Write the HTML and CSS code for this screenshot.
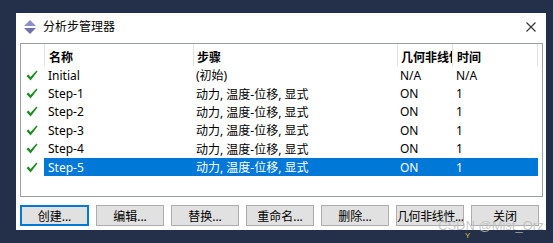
FILE: index.html
```html
<!DOCTYPE html>
<html lang="zh-CN">
<head>
    <meta charset="UTF-8">
    <title>分析步管理器</title>
    <link rel="stylesheet" href="styles.css">
</head>
<body>
    <div class="dialog">
        <div class="titlebar">
            <svg class="app-icon" width="12" height="14" viewBox="0 0 12 14">
                <polygon points="6,0 12,6 0,6" fill="#8d8fc6"/>
                <polygon points="0,8 12,8 6,14" fill="#6f71ab"/>
            </svg>
            <span class="title">分析步管理器</span>
            <svg class="close" width="10" height="10" viewBox="0 0 10 10">
                <path d="M0.5 0.5 L9.5 9.5 M9.5 0.5 L0.5 9.5" stroke="#333" stroke-width="1.1" fill="none"/>
            </svg>
        </div>

        <div class="list">
            <div class="row header">
                <div class="cell check"></div>
                <div class="cell">名称</div>
                <div class="cell">步骤</div>
                <div class="cell">几何非线性</div>
                <div class="cell last">时间</div>
            </div>
            <div class="row">
                <div class="cell check"><svg width="12" height="11" viewBox="0 0 12 11"><path d="M0.5 6 L2.5 4.5 L4.5 7 L10.5 0.5 L11.5 1.5 L4.6 10.5 Z" fill="#1f8a1f"/></svg></div>
                <div class="cell">Initial</div>
                <div class="cell">(初始)</div>
                <div class="cell">N/A</div>
                <div class="cell">N/A</div>
            </div>
            <div class="row">
                <div class="cell check"><svg width="12" height="11" viewBox="0 0 12 11"><path d="M0.5 6 L2.5 4.5 L4.5 7 L10.5 0.5 L11.5 1.5 L4.6 10.5 Z" fill="#1f8a1f"/></svg></div>
                <div class="cell">Step-1</div>
                <div class="cell">动力, 温度-位移, 显式</div>
                <div class="cell">ON</div>
                <div class="cell">1</div>
            </div>
            <div class="row">
                <div class="cell check"><svg width="12" height="11" viewBox="0 0 12 11"><path d="M0.5 6 L2.5 4.5 L4.5 7 L10.5 0.5 L11.5 1.5 L4.6 10.5 Z" fill="#1f8a1f"/></svg></div>
                <div class="cell">Step-2</div>
                <div class="cell">动力, 温度-位移, 显式</div>
                <div class="cell">ON</div>
                <div class="cell">1</div>
            </div>
            <div class="row">
                <div class="cell check"><svg width="12" height="11" viewBox="0 0 12 11"><path d="M0.5 6 L2.5 4.5 L4.5 7 L10.5 0.5 L11.5 1.5 L4.6 10.5 Z" fill="#1f8a1f"/></svg></div>
                <div class="cell">Step-3</div>
                <div class="cell">动力, 温度-位移, 显式</div>
                <div class="cell">ON</div>
                <div class="cell">1</div>
            </div>
            <div class="row">
                <div class="cell check"><svg width="12" height="11" viewBox="0 0 12 11"><path d="M0.5 6 L2.5 4.5 L4.5 7 L10.5 0.5 L11.5 1.5 L4.6 10.5 Z" fill="#1f8a1f"/></svg></div>
                <div class="cell">Step-4</div>
                <div class="cell">动力, 温度-位移, 显式</div>
                <div class="cell">ON</div>
                <div class="cell">1</div>
            </div>
            <div class="row selected">
                <div class="cell check"><svg width="12" height="11" viewBox="0 0 12 11"><path d="M0.5 6 L2.5 4.5 L4.5 7 L10.5 0.5 L11.5 1.5 L4.6 10.5 Z" fill="#1f8a1f"/></svg></div>
                <div class="cell">Step-5</div>
                <div class="cell">动力, 温度-位移, 显式</div>
                <div class="cell">ON</div>
                <div class="cell">1</div>
            </div>
        </div>

        <div class="buttons">
            <button class="btn default">创建...</button>
            <button class="btn">编辑...</button>
            <button class="btn">替换...</button>
            <button class="btn">重命名...</button>
            <button class="btn">删除...</button>
            <button class="btn tight">几何非线性...</button>
            <button class="btn">关闭</button>
        </div>
    </div>

    <div class="mark">Y</div>
    <div class="watermark">CSDN @Mist_Orz</div>
</body>
</html>
```

FILE: styles.css
```css
body {
    margin: 0;
    width: 553px;
    height: 243px;
    background-color: #243049;
    font-family: "Noto Sans", "Noto Sans CJK SC", sans-serif;
    font-size: 12px;
    color: #000;
    overflow: hidden;
    position: relative;
}

.dialog {
    margin: 13px 0 0 16px;
    width: 530px;
    height: 217px;
    box-sizing: border-box;
    padding: 0 3px 4px 4px;
    background-color: #fff;
    display: flex;
    flex-direction: column;
}

.titlebar {
    height: 30px;
    display: flex;
    align-items: center;
    padding: 0 7px 3px 4px;
    box-sizing: border-box;
}

.app-icon {
    margin-right: 7px;
}

.title {
    flex: 1;
    line-height: 14px;
}

.list {
    height: 154px;
    box-sizing: border-box;
    border: 1px solid #9a9ea6;
    background-color: #fff;
}

.row {
    display: grid;
    grid-template-columns: 23px 149px 204px 55px 86px;
    height: 18.4px;
}

.row.header {
    height: 22px;
    font-weight: bold;
}

.cell {
    display: flex;
    align-items: center;
    padding-left: 3px;
    white-space: nowrap;
    overflow: hidden;
}

.header .cell {
    border-left: 1px solid #e3e3e3;
    padding-left: 3px;
    padding-top: 3px;
    align-items: center;
}

.header .cell.check {
    border-left: none;
}

.header .cell.last {
    border-right: 1px solid #e3e3e3;
}

.cell.check {
    padding-left: 5px;
}

.row .cell:nth-child(2) {
    padding-left: 4px;
}

.row .cell:nth-child(5) {
    padding-left: 4px;
}

.selected .cell {
    background-color: #0078d7;
    color: #fff;
}

.selected .cell.check {
    background-color: transparent;
}

.buttons {
    display: flex;
    gap: 7px;
    margin-top: 8px;
}

.btn {
    width: 68px;
    height: 21px;
    padding: 0;
    border: 1px solid #adadad;
    background-color: #e1e1e1;
    font-family: "Noto Sans", "Noto Sans CJK SC", sans-serif;
    font-size: 12px;
    color: #000;
    white-space: nowrap;
    overflow: hidden;
}

.btn.tight {
    letter-spacing: -0.4px;
}

.btn.default {
    width: 69px;
    border-color: #0078d7;
    box-shadow: inset 0 0 0 1px #0078d7;
}

.watermark {
    position: absolute;
    left: 438px;
    top: 218px;
    font-family: "Liberation Sans", sans-serif;
    font-size: 13px;
    color: rgba(190, 190, 190, 0.85);
}

.mark {
    position: absolute;
    left: 465px;
    top: 231px;
    font-family: "Liberation Sans", sans-serif;
    font-size: 8px;
    color: #d8c63a;
}
```
